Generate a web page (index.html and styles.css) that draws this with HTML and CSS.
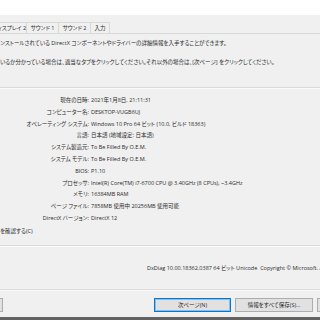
FILE: index.html
```html
<!DOCTYPE html>
<html lang="ja">
<head>
<meta charset="utf-8">
<title>DirectX 診断ツール</title>
<link rel="stylesheet" href="styles.css">
</head>
<body>
<div class="window">
  <div class="titlebar"></div>
  <div class="tabs">
    <div class="tab tab-first">ディスプレイ 2</div>
    <div class="tab">サウンド 1</div>
    <div class="tab">サウンド 2</div>
    <div class="tab tab-small">入力</div>
  </div>
  <div class="intro">
    <p>ンストールされている DirectX コンポーネントやドライバーの詳細情報を入手することができます。</p>
    <p class="second">いるか分かっている場合は、適当なタブをクリックしてください。それ以外の場合は、[次ページ] をクリックしてください。</p>
  </div>
  <div class="rule"></div>
  <dl class="info">
    <dt>現在の日時:</dt><dd>2021年1月8日, 21:11:31</dd>
    <dt>コンピューター名:</dt><dd>DESKTOP-VUGB6UJ</dd>
    <dt>オペレーティング システム:</dt><dd>Windows 10 Pro 64 ビット (10.0, ビルド 18363)</dd>
    <dt>言語:</dt><dd>日本語 (地域設定: 日本語)</dd>
    <dt>システム製造元:</dt><dd>To Be Filled By O.E.M.</dd>
    <dt>システム モデル:</dt><dd>To Be Filled By O.E.M.</dd>
    <dt>BIOS:</dt><dd>P1.10</dd>
    <dt>プロセッサ:</dt><dd>Intel(R) Core(TM) i7-6700 CPU @ 3.40GHz (8 CPUs), ~3.4GHz</dd>
    <dt>メモリ:</dt><dd>16384MB RAM</dd>
    <dt>ページ ファイル:</dt><dd>7858MB 使用中 20256MB 使用可能</dd>
    <dt>DirectX バージョン:</dt><dd>DirectX 12</dd>
  </dl>
  <div class="check">を確認する(C)</div>
  <div class="rule rule-lower"></div>
  <div class="version">DxDiag 10.00.18362.0387 64 ビット Unicode&nbsp; Copyright © Microsoft. All rights reserved.</div>
  <div class="rule rule-bottom"></div>
  <div class="buttons">
    <div class="btn btn-partial"></div>
    <div class="btn btn-default">次ページ(N)</div>
    <div class="btn btn-save">情報をすべて保存(S)...</div>
    <div class="btn btn-exit">終了(X)</div>
  </div>
  <div class="taskbar"></div>
</div>
</body>
</html>
```
FILE: styles.css
```css
html, body {
  margin: 0;
  padding: 0;
}
body {
  width: 320px;
  height: 320px;
  overflow: hidden;
  background: #f0f0f0;
}
.window {
  display: flex;
  flex-direction: column;
  width: 320px;
  height: 320px;
  overflow: hidden;
  font-family: "Open Sans", "Noto Sans CJK JP", sans-serif;
  font-size: 5.5px;
  font-feature-settings: "palt";
  color: #2a2a2a;
}
.titlebar {
  height: 15px;
  background: #ffffff;
  flex-shrink: 0;
}
.tabs {
  height: 18px;
  display: flex;
  align-items: flex-end;
  border-bottom: 1px solid #d9d9d9;
  flex-shrink: 0;
}
.tab {
  box-sizing: border-box;
  height: 11px;
  width: 32px;
  border-top: 1px solid #d9d9d9;
  border-right: 1px solid #d9d9d9;
  display: flex;
  align-items: center;
  justify-content: center;
  white-space: nowrap;
  flex-shrink: 0;
  line-height: 10px;
}
.tab-first {
  width: 34px;
  margin-left: -7px;
}
.tab-small {
  width: 19px;
}
.intro {
  padding: 3px 0 19px;
  white-space: nowrap;
  flex-shrink: 0;
}
.intro p {
  margin: 0;
  line-height: 12px;
}
.intro .second {
  margin-top: 7px;
}
.rule {
  height: 1px;
  background: #dadada;
  border-bottom: 1px solid #fbfbfb;
  flex-shrink: 0;
}
.info {
  margin: 0;
  padding-top: 6px;
  display: grid;
  grid-template-columns: 89px max-content;
  column-gap: 2px;
  line-height: 11.8px;
  flex-shrink: 0;
}
.info dt {
  text-align: right;
  white-space: nowrap;
}
.info dd {
  margin: 0;
  white-space: nowrap;
}
.check {
  line-height: 12px;
  white-space: nowrap;
  flex-shrink: 0;
}
.rule-lower {
  margin-top: 8px;
}
.version {
  margin-top: 15px;
  padding-left: 147px;
  line-height: 12px;
  white-space: nowrap;
  flex-shrink: 0;
}
.rule-bottom {
  margin-top: 15px;
}
.buttons {
  margin-top: 7px;
  display: flex;
  height: 14px;
  flex-shrink: 0;
}
.btn {
  box-sizing: border-box;
  height: 14px;
  flex-shrink: 0;
  background: #e1e1e1;
  border: 1px solid #adadad;
  display: flex;
  align-items: center;
  justify-content: center;
  white-space: nowrap;
  line-height: 10px;
}
.btn-partial {
  width: 20px;
  margin-left: -17px;
}
.btn-default {
  width: 77px;
  margin-left: 151px;
  border-color: #0078d7;
  box-shadow: inset 0 0 0 1px rgba(0, 120, 215, 0.35);
}
.btn-save {
  width: 78px;
  margin-left: 4px;
}
.btn-exit {
  width: 76px;
  margin-left: 4px;
}
.taskbar {
  margin-top: 5px;
  height: 3px;
  background: #626262;
  flex-shrink: 0;
}
```
